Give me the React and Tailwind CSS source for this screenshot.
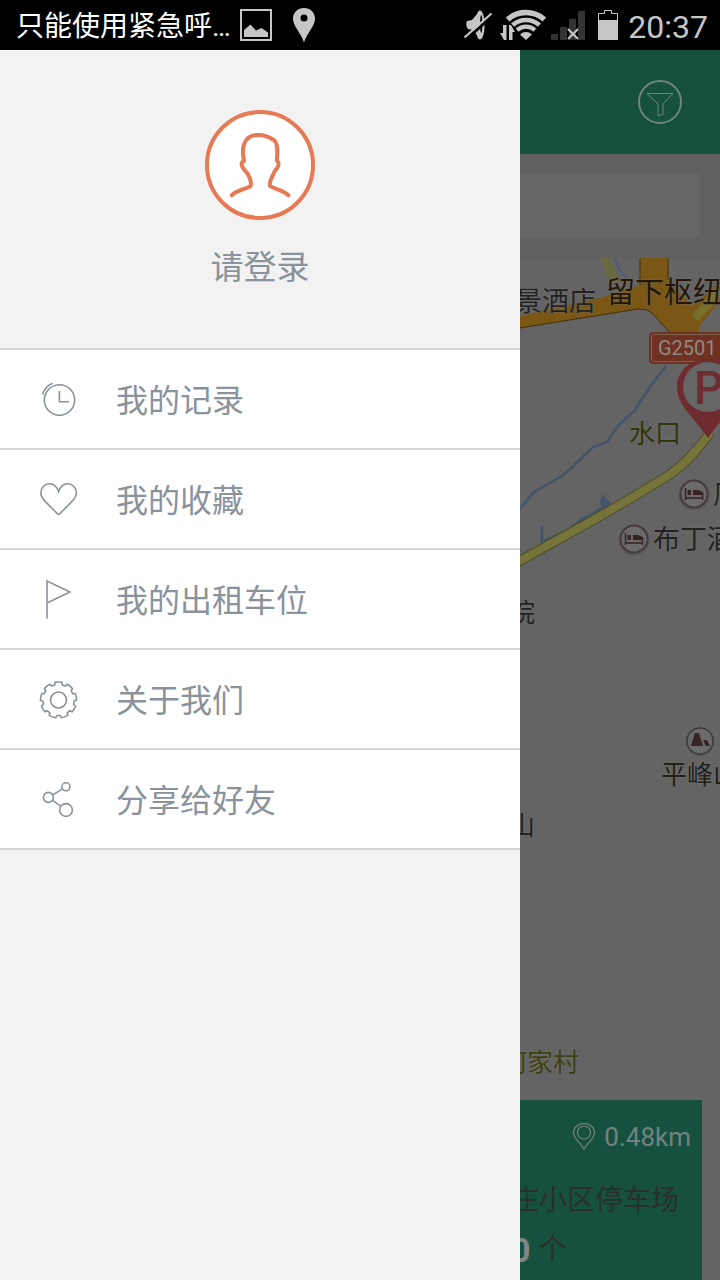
const FONT = "font-['Roboto','Noto_Sans_CJK_SC',sans-serif]";

// outline of a toothed gear around (cx, cy)
function gearPath(cx, cy, teeth, inner, outer) {
  const step = 360 / teeth;
  const at = (r, deg) => {
    const a = ((deg - 90) * Math.PI) / 180;
    return `${(cx + r * Math.cos(a)).toFixed(1)} ${(cy + r * Math.sin(a)).toFixed(1)}`;
  };
  let d = "";
  for (let i = 0; i < teeth; i++) {
    const c = i * step;
    d += `${i ? "L" : "M"}${at(inner, c - 14)}L${at(outer, c - 11)}A${outer} ${outer} 0 0 1 ${at(outer, c + 11)}L${at(inner, c + 14)}L${at(inner, c + step - 14)}`;
  }
  return d + "Z";
}

const ICONS = {
  clock: (
    <>
      <circle cx="21.5" cy="21" r="15.2" />
      <path d="M21.4 12v10.7h9.4M4.4 15.6C6 10.4 9.5 6.4 14.6 4.2" />
    </>
  ),
  heart: <path d="M20.6 12.6C18.5 7 15.5 4.8 11.8 4.8 6.5 4.8 2.8 8.9 2.8 13.8c0 3.6 1.7 6 4.6 8.8l11.8 11.9q1.4 1.4 2.8 0L33.8 22.6c2.9-2.8 4.6-5.2 4.6-8.8 0-4.9-3.7-9-9-9-3.7 0-6.7 2.2-8.8 7.8z" />,
  flag: <path d="M9 39.5V2l23 11L9 24" />,
  gear: (
    <>
      <path d={gearPath(20.5, 21, 9, 15.6, 18)} />
      <circle cx="20.5" cy="21" r="8" />
    </>
  ),
  share: (
    <>
      <circle cx="28" cy="7.8" r="4" />
      <circle cx="10.4" cy="18.4" r="5" />
      <circle cx="28" cy="31" r="6.4" />
      <path d="M24.6 9.9L14.7 15.9M14.4 21.4L22.9 27.1" />
    </>
  ),
};

const MENU = [
  { icon: "clock", label: "我的记录" },
  { icon: "heart", label: "我的收藏" },
  { icon: "flag", label: "我的出租车位" },
  { icon: "gear", label: "关于我们" },
  { icon: "share", label: "分享给好友" },
];

const PLACES = [
  { name: "景酒店", cls: "-left-[5px] top-[28px] text-[27px] text-[#222222]" },
  { name: "留下枢纽", cls: "left-[86px] top-[19px] text-[29px] text-[#241505]" },
  { name: "水口", cls: "left-[109px] top-[160px] text-[26px] text-[#2f3508]" },
  { name: "周", cls: "left-[193px] top-[221px] text-[26px] text-[#222222]" },
  { name: "布丁酒店", cls: "left-[133px] top-[266px] text-[27px] text-[#222222]" },
  { name: "院", cls: "-left-[11px] top-[339px] text-[26px] text-[#222222]" },
  { name: "平峰山", cls: "left-[141px] top-[501px] text-[26px] text-[#222018]" },
  { name: "山", cls: "-left-[11px] top-[552px] text-[26px] text-[#222222]" },
  { name: "何家村", cls: "-left-[19px] top-[789px] text-[26px] text-[#3c400e]" },
];

function StatusBar() {
  return (
    <div className="flex h-[50px] items-center justify-between bg-black pl-4 pr-3 text-[#c6c6c6]">
      <div className="flex items-center">
        <span className="pt-1 text-[28px] leading-[46px] text-white">只能使用紧急呼…</span>
        <svg className="ml-[9px] h-8 w-8" viewBox="0 0 32 32">
          <rect x="1" y="1" width="30" height="30" fill="none" stroke="currentColor" strokeWidth="2" />
          <path d="M4 28V21L10.5 15.5 16 21.5 21.500 19 28 23.500V28z" fill="currentColor" />
        </svg>
        <svg className="ml-5 h-9 w-6" viewBox="0 0 24 36">
          <path fillRule="evenodd" d="M12 1C5.500 1 1 5.700 1 11.700 1 19 9 26 12 35.500 15 26 23 19 23 11.700 23 5.700 18.500 1 12 1zM12 7.500a3.500 3.500 0 1 1 0 7 3.500 3.500 0 0 1 0-7z" fill="currentColor" />
        </svg>
      </div>
      <div className="flex items-center">
        <svg className="h-8 w-[156px]" viewBox="0 0 156 32">
          <path d="M3 12L8 11 14 4V27L9 21 4 20Q1 16 3 12z" fill="currentColor" />
          <ellipse cx="16" cy="16" rx="4.600" ry="14.500" fill="currentColor" />
          <ellipse cx="17.200" cy="15" rx="1.200" ry="9" fill="#000" />
          <path d="M2 30.500L29 6.500" stroke="#000" strokeWidth="3" />
          <path d="M0.500 28.500L27.500 4.500" stroke="currentColor" strokeWidth="2.200" />
          <path d="M43.600 10.600A27.500 27.500 0 0 1 80.400 10.600" fill="none" stroke="currentColor" strokeWidth="5.400" />
          <path d="M48.600 16.100A20 20 0 0 1 75.400 16.100" fill="none" stroke="currentColor" strokeWidth="4.600" />
          <path d="M53.100 21.100A13.300 13.300 0 0 1 70.900 21.100" fill="none" stroke="currentColor" strokeWidth="4.200" />
          <path d="M62 31L56 25.500A8.500 8.500 0 0 1 68 25.500z" fill="currentColor" />
          <path d="M39 16h3.500v15H40L36 24h3zM45 31V16h2l4 7h-2.500v8z" fill="currentColor" stroke="#000" strokeWidth="2" paintOrder="stroke" />
          <path d="M87 25h7v6h-7zM96 18h7v13h-7zM105 10h7v21h-7zM114 2h7v29h-7z" fill="#333" />
          <path d="M104 20l10 10M114 20l-10 10" stroke="currentColor" strokeWidth="2" />
          <path d="M134.500 11V4.500h6V1.500h7v3h6V11" fill="none" stroke="currentColor" />
          <path d="M134 11h20v20h-20z" fill="currentColor" />
        </svg>
        <span className="ml-2 pt-1 text-[32px] leading-[46px]">20:37</span>
      </div>
    </div>
  );
}

function Drawer() {
  return (
    <aside className="bg-[#f2f2f2] text-[#8a929b]">
      <button className="flex h-[298px] w-full flex-col items-center pt-[60px]">
        <svg className="h-[110px] w-[110px]" viewBox="0 0 110 110" stroke="#e57a54" strokeWidth="4" strokeLinecap="round" strokeLinejoin="round">
          <circle cx="55" cy="55" r="53" fill="#fff" />
          <path fill="none" d="M26.700 85.300C31 80.500 40 79.500 45.700 76 47 72 45 69 43.600 65.500 42 62 39.500 61 37.500 57 36 54 36.500 51.500 39 51 37.500 44 37.500 39 39 34.500 41 28 46 25 53 25 60 25 66 28 69.500 30.500 73.500 35 72.500 44 71.800 50.500 74 52 74 55 72.500 57.500 71 60 69 60.500 68 65 67 68 64 70 65 76 71 79.500 79 80.500 83.400 85.300" />
        </svg>
        <span className="mt-[26px] text-[33px] leading-[44px]">请登录</span>
      </button>
      <nav className="border-t-2 border-[#d5d6d8] bg-white">
        {MENU.map((m) => (
          <button key={m.label} className="flex h-[100px] w-full items-center border-b-2 border-[#d5d6d8] pl-[38px] text-left">
            <svg className="h-10 w-10" viewBox="0 0 40 40" fill="none" stroke="currentColor" strokeWidth="1.6">
              {ICONS[m.icon]}
            </svg>
            <span className="ml-[38px] pt-1 text-[32px] leading-[48px]">{m.label}</span>
          </button>
        ))}
      </nav>
    </aside>
  );
}

function HotelPin({ x, y }) {
  return (
    <g transform={`translate(${x} ${y})`}>
      <circle cy="1" r="15.5" fill="#585858" />
      <circle r="13.5" fill="#6b6b6b" stroke="#453b3b" strokeWidth="2" />
      <path d="M-8.500 -6V6M-8.500 4H8.500V6M8.500 4V-2" fill="none" stroke="#372224" strokeWidth="1.500" />
      <path d="M-1 -4H4L8 -2.500V1H-1zM-6.500 -4H-3V1H-6.500z" fill="#372224" />
    </g>
  );
}

function MapArt() {
  return (
    <svg className="absolute left-0 top-0 h-[560px] w-[200px]" viewBox="0 0 200 560" fill="none">
      <path d="M85 -2Q88 12 97 24" stroke="#6c6b40" strokeWidth="8" />
      <path d="M95 0Q97 12 108 20" stroke="#4b5c74" strokeWidth="2" />
      <path d="M0 58L80 40 120 27V0H148V22L172 48 200 24V42L179 69V76H150V74L132 55Q126 50 118 51L0 70z" fill="#7a5714" />
      <path d="M0 70L118 51Q126 50 132 55L150 75M120 27V0M148 0V22" stroke="#3f300e" />
      <path d="M200 33L175 60" stroke="#77702b" strokeWidth="9" />
      <path d="M146 108L130 129 115 152 97 169 87 184 73 189 45 216 13 235 0 251" stroke="#445468" strokeWidth="2.500" />
      <path d="M22 268V284L50 271 62 261 71 257 83 249" stroke="#445468" strokeWidth="3" />
      <path d="M80 243L82 236 91 245 88 252 83 254z" fill="#445468" />
      <path d="M190 175Q166 207 146 219Q92 252 50 275L-4 305" stroke="#4d4c28" strokeWidth="10" />
      <path d="M190 175Q166 207 146 219Q92 252 50 275L-4 305" stroke="#75743b" strokeWidth="8" />
      <HotelPin x={174} y={236} />
      <HotelPin x={114} y={281} />
      <circle cx="180" cy="484" r="14" fill="#555" />
      <circle cx="180" cy="483" r="13" fill="#6b6b6b" stroke="#403c3a" strokeWidth="1.500" />
      <path d="M171 488L175 475H179L183 488zM183 482L187 482 190 488H186z" fill="#352326" />
    </svg>
  );
}

function ParkingMap() {
  return (
    <section className="relative min-h-[1022px] flex-1 overflow-hidden bg-[#646464]">
      <MapArt />
      {PLACES.map((p) => (
        <span key={p.name} className={`absolute whitespace-nowrap leading-[32px] [text-shadow:0_0_2px_#777777] ${p.cls}`}>{p.name}</span>
      ))}
      <span className="absolute left-[129px] top-[74px] h-8 rounded-[4px] border-2 border-[#6f3222] bg-[#6f3222] pr-2 text-[20px] text-[#8f8a84]">
        <span className="block h-7 rounded-[3px] border border-[#85614f] px-[6px] leading-[26px]">G2501</span>
      </span>
      <svg className="absolute left-[157px] top-[98px] h-[82px] w-[62px]" viewBox="0 0 62 82">
        <path d="M31 3C14 3 0 14 0 31 0 50 18 62 31 82 44 62 62 50 62 31 62 14 48 3 31 3z" fill="#6f2c30" />
        <circle cx="31" cy="31" r="25" fill="#666" />
      </svg>
      <span className="absolute left-[174px] top-[106px] text-[46px] font-medium leading-[48px] text-[#6f2c30]">P</span>

      <article className="absolute bottom-0 left-0 right-[18px] h-[180px] overflow-hidden bg-[#165140] pt-[18px] text-[#2a2f2e]">
        <div className="flex items-center justify-end pr-[11px] text-[26px] leading-[38px] text-[#74827e]">
          <svg className="mr-2 h-7 w-6" viewBox="0 0 24 28" fill="none" stroke="currentColor" strokeWidth="1.2">
            <path d="M12 26C9 20.500 1.500 15.500 1.500 10A10.500 9.500 0 0 1 22.500 10C22.500 15.500 15 20.500 12 26z" />
            <circle cx="12" cy="9.500" r="6.500" />
          </svg>
          0.48km
        </div>
        <h2 className="-ml-[9px] mt-[26px] whitespace-nowrap text-[28px] leading-[38px]">庄小区停车场</h2>
        <p className="-ml-[9px] mt-2 flex items-center gap-2 text-[28px] leading-[44px]">
          <b className="text-[34px] text-[#808683]">0</b>个
        </p>
      </article>
    </section>
  );
}

export default function App() {
  return (
    <div className={`flex min-h-screen flex-col ${FONT}`}>
      <StatusBar />
      <main className="grid flex-1 grid-cols-[13fr_5fr]">
        <Drawer />
        <div className="flex min-w-0 flex-col">
          <header className="flex h-[104px] items-center justify-end bg-[#165140] pr-[38px]">
            <button aria-label="筛选" className="text-[#6f8680]">
              <svg className="h-11 w-11" viewBox="0 0 44 44" fill="none" stroke="currentColor">
                <circle cx="22" cy="22" r="21" strokeWidth="2" />
                <path d="M9 13.5H35L25 24V34L20 36V24z" />
              </svg>
            </button>
          </header>
          <div className="h-[104px] bg-[#606060] py-5 pr-5">
            <input aria-label="搜索" className="block h-16 w-full bg-[#666666] px-4 text-[28px] outline-none" />
          </div>
          <ParkingMap />
        </div>
      </main>
    </div>
  );
}
